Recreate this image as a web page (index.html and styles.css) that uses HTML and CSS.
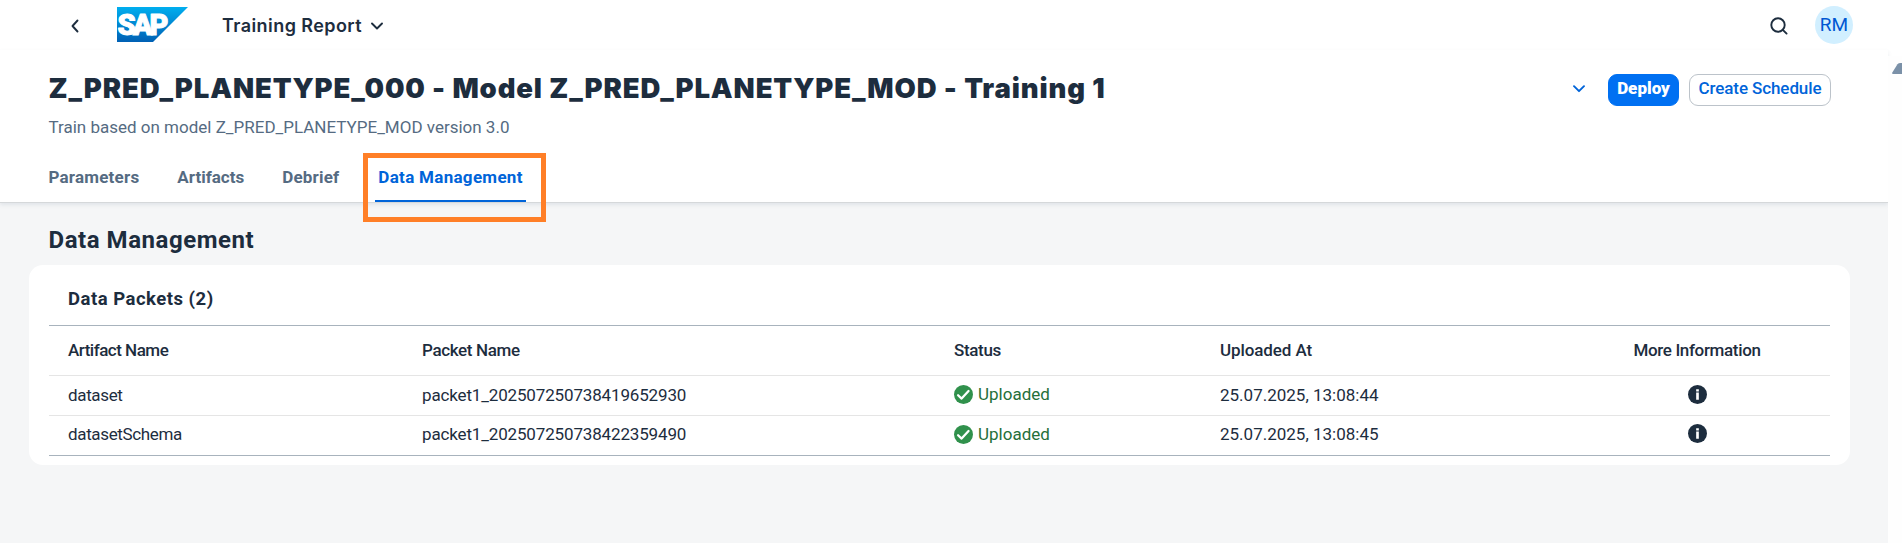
FILE: index.html
```html
<!DOCTYPE html>
<html lang="en">
<head>
<meta charset="utf-8">
<title>Training Report</title>
<link rel="stylesheet" href="styles.css">
</head>
<body>
<header class="shell">
  <svg class="back" width="8" height="14" viewBox="0 0 8 14"><path d="M6.5 1.5 1.5 7l5 5.5"/></svg>
  <svg class="logo" width="71" height="35" viewBox="0 0 71 35">
    <defs><linearGradient id="g" x1="0" y1="0" x2="0" y2="1"><stop offset="0" stop-color="#00aeef"/><stop offset="1" stop-color="#0060b4"/></linearGradient></defs>
    <path d="M0 0H71L36 35H0Z" fill="url(#g)"/>
    <text class="logo-text" x="0.5" y="28" textLength="51" lengthAdjust="spacing">SAP</text>
  </svg>
  <div class="app-title"><span class="app-name">Training Report</span>
    <svg width="12" height="8" viewBox="0 0 12 8"><path d="M1 1.5 6 6.5 11 1.5"/></svg>
  </div>
  <svg class="search" width="18" height="18" viewBox="0 0 18 18"><circle cx="8" cy="8" r="6.7"/><path d="M12.8 12.8 16.6 16.6"/></svg>
  <div class="avatar">RM</div>
</header>
<div class="page">
  <div class="content">
    <section class="object-header">
      <div class="title-row">
        <h1>Z_PRED_PLANETYPE_000 - Model Z_PRED_PLANETYPE_MOD - Training 1</h1>
        <div class="actions">
          <svg class="expand" width="12" height="8" viewBox="0 0 12 8"><path d="M1 1.2 6 6.2 11 1.2"/></svg>
          <button class="btn btn-primary">Deploy</button>
          <button class="btn btn-outline">Create Schedule</button>
        </div>
      </div>
      <p class="subtitle">Train based on model Z_PRED_PLANETYPE_MOD version 3.0</p>
      <nav class="tabs">
        <a class="tab">Parameters</a>
        <a class="tab tight">Artifacts</a>
        <a class="tab">Debrief</a>
        <a class="tab active">Data Management<i class="callout"></i></a>
      </nav>
    </section>
    <main>
      <h2>Data Management</h2>
      <section class="card">
        <h3>Data Packets (2)</h3>
        <div class="row head">
          <div class="artifact-label">Artifact Name</div><div>Packet Name</div><div>Status</div><div class="date-label">Uploaded At</div><div class="info-cell">More Information</div>
        </div>
        <div class="row">
          <div class="artifact">dataset</div><div class="packet">packet1_202507250738419652930</div>
          <div class="status"><svg width="19" height="19" viewBox="0 0 20 20"><circle cx="10" cy="10" r="10"/><path d="M4.3 10.8 8 14.3 15.3 6.4"/></svg>Uploaded</div>
          <div>25.07.2025, 13:08:44</div>
          <div class="info-cell"><svg class="info" width="19" height="19" viewBox="0 0 20 20"><circle cx="10" cy="10" r="10"/><path d="M8.6 4.4h2.8v2.4H8.6zM8.6 8h2.8v7.6H8.6z"/></svg></div>
        </div>
        <div class="row last">
          <div class="artifact">datasetSchema</div><div class="packet">packet1_202507250738422359490</div>
          <div class="status"><svg width="19" height="19" viewBox="0 0 20 20"><circle cx="10" cy="10" r="10"/><path d="M4.3 10.8 8 14.3 15.3 6.4"/></svg>Uploaded</div>
          <div>25.07.2025, 13:08:45</div>
          <div class="info-cell"><svg class="info" width="19" height="19" viewBox="0 0 20 20"><circle cx="10" cy="10" r="10"/><path d="M8.6 4.4h2.8v2.4H8.6zM8.6 8h2.8v7.6H8.6z"/></svg></div>
        </div>
      </section>
    </main>
  </div>
  <aside class="scroll"><svg width="10" height="12" viewBox="0 0 10 12"><path d="M0.3 11V9.5L5.5 1.3Q6.5 0 8.5 0H10V11Z"/></svg></aside>
</div>
</body>
</html>
```
FILE: styles.css
```css
* { box-sizing: border-box; }
body { margin: 0; height: 543px; overflow: hidden; background: #fff; color: #1d2d3e; font: 17px/24px Roboto, "Noto Sans", sans-serif; display: flex; flex-direction: column; }
h1, h2, h3, p { margin: 0; }
svg { display: block; flex: none; fill: none; stroke: #1d2d3e; stroke-width: 1.9; stroke-linejoin: round; stroke-linecap: round; }
.shell { height: 50px; flex: none; display: flex; align-items: center; padding: 0 49px 0 71px; }
.back { margin-top: 2px; }
.logo { margin: -1px 0 0 38px; stroke: none; }
.logo-text { font: 900 29px Roboto, sans-serif; fill: #fff; stroke: #fff; stroke-width: 1; }
.app-title { display: flex; align-items: center; gap: 9px; margin: 1px auto 0 34px; font: 600 18px/24px Inter, Roboto, sans-serif; letter-spacing: .43px; }
.search { margin: 1px 27px 0 0; }
.avatar { width: 38px; height: 38px; border-radius: 50%; background: #d1efff; color: #0057d2; font-size: 19px; display: flex; align-items: center; justify-content: center; }
.page { flex: 1; display: flex; min-height: 0; }
.content { width: 1888px; display: flex; flex-direction: column; background: #f5f6f7; }
.object-header { height: 153px; padding: 20px 57px 0 48.5px; background: #fff; border-bottom: 1px solid #d5d8da; box-shadow: 0 2px 4px rgba(85, 107, 130, .12); }
.title-row { display: flex; justify-content: space-between; height: 36px; }
h1 { font: 900 27.5px/36px Inter, Roboto, sans-serif; letter-spacing: .88px; white-space: nowrap; }
.actions { display: flex; align-items: center; padding-top: 4px; }
.expand { margin: -3px 23px 0 0; stroke: #0064d9; }
.btn { height: 32px; padding: 0 0 4px; border-radius: 9px; font: 500 17px/24px Roboto, sans-serif; text-align: center; white-space: nowrap; }
.btn-primary { width: 71px; margin-right: 10px; border: 1px solid #0070f2; background: #0070f2; color: #fff; font-weight: 900; }
.btn-outline { width: 142px; border: 1px solid #bcc3ca; background: #fff; color: #0064d9; letter-spacing: -.1px; }
.subtitle { margin-top: 9px; color: #556b82; }
.tabs { display: flex; gap: 38px; height: 49px; margin-top: 14px; color: #556b82; font-weight: 700; letter-spacing: .2px; }
.tab { position: relative; padding-top: 12px; height: 49px; }
.tight { letter-spacing: 0; }
.active { color: #0064d9; margin: 0 -2px; padding: 12px 3px 0; border-bottom: 2px solid #0064d9; letter-spacing: .3px; }
.callout { position: absolute; left: -12px; top: 0; width: 183px; height: 69px; border: 5px solid #ff7f27; }
main { padding: 22px 38px 0 29px; }
h2 { font-size: 24px; line-height: 30px; padding-left: 19.5px; margin-bottom: 10px; letter-spacing: .55px; }
.card { height: 200px; border-radius: 14px; background: #fff; padding: 8px 20px 0; }
h3 { height: 52px; line-height: 53px; padding-left: 19px; font-size: 18.5px; letter-spacing: .5px; }
.row { display: grid; grid-template-columns: 354px 532px 266px 363px 266px; height: 40px; align-items: center; border-bottom: 1px solid #e5e5e5; }
.row > div { padding: 0 0 2px 19px; }
.head { height: 51px; border-top: 1px solid #a8b3bd; font-weight: 500; letter-spacing: -.35px; }
.artifact-label { letter-spacing: -.5px; }
.date-label { letter-spacing: -.1px; }
.artifact { letter-spacing: -.35px; }
.packet { letter-spacing: -.15px; }
.last { border-bottom-color: #a8b3bd; }
.last > div { padding-bottom: 3px; }
.row > .status { display: flex; align-items: center; gap: 5.5px; padding: 0 0 3px 18.5px; color: #256f3a; }
.status circle { fill: #30914c; stroke: none; }
.status path { stroke: #fff; stroke-width: 2.4; }
.row > .info-cell { padding-left: 0; display: flex; justify-content: center; }
.last > .info-cell { padding-bottom: 4px; }
.info { stroke: none; }
.info circle { fill: #1d2d3e; }
.info path { fill: #fff; }
.scroll { width: 14px; margin-top: 6px; padding: 7px 0 0 4px; background: #fefefe; }
.scroll path { fill: #7b91a8; stroke: none; }
```
